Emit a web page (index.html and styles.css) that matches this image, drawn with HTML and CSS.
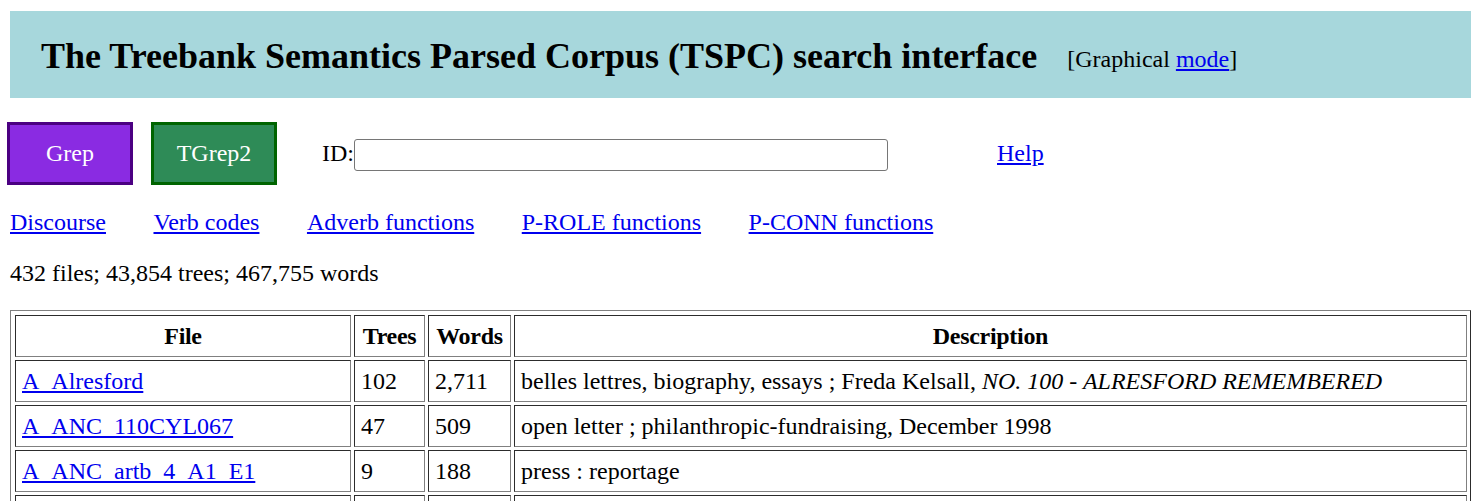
FILE: index.html
```html
<!DOCTYPE html>
<html lang="en">
<head>
<meta charset="utf-8">
<title>TSPC search interface</title>
<link rel="stylesheet" href="styles.css">
</head>
<body>
<header class="banner">
  <h1 class="title">The Treebank Semantics Parsed Corpus (TSPC) search interface</h1>
  <span class="mode">[Graphical <a href="#">mode</a>]</span>
</header>

<form class="controls">
  <button type="button" class="btn btn-grep">Grep</button>
  <button type="button" class="btn btn-tgrep">TGrep2</button>
  <label class="id-label" for="idfield">ID:</label><input id="idfield" class="id-input" type="text">
  <a class="help" href="#">Help</a>
</form>

<nav class="links">
  <a href="#">Discourse</a>
  <a href="#">Verb codes</a>
  <a href="#">Adverb functions</a>
  <a href="#">P-ROLE functions</a>
  <a href="#">P-CONN functions</a>
</nav>

<p class="stats">432 files; 43,854 trees; 467,755 words</p>

<table class="files">
  <thead>
    <tr>
      <th class="c-file">File</th>
      <th class="c-trees">Trees</th>
      <th class="c-words">Words</th>
      <th class="c-desc">Description</th>
    </tr>
  </thead>
  <tbody>
    <tr>
      <td><a href="#">A_Alresford</a></td>
      <td>102</td>
      <td>2,711</td>
      <td>belles lettres, biography, essays ; Freda Kelsall, <i>NO. 100 - ALRESFORD REMEMBERED</i></td>
    </tr>
    <tr>
      <td><a href="#">A_ANC_110CYL067</a></td>
      <td>47</td>
      <td>509</td>
      <td>open letter ; philanthropic-fundraising, December 1998</td>
    </tr>
    <tr>
      <td><a href="#">A_ANC_artb_4_A1_E1</a></td>
      <td>9</td>
      <td>188</td>
      <td>press : reportage</td>
    </tr>
    <tr>
      <td><a href="#">A_ANC_artb_4_A1_E2</a></td>
      <td>11</td>
      <td>205</td>
      <td>press : reportage</td>
    </tr>
  </tbody>
</table>
</body>
</html>
```

FILE: styles.css
```css
html, body {
  margin: 0;
  padding: 0;
  background: #ffffff;
  color: #000000;
  font-family: "Liberation Serif", "Times New Roman", serif;
  font-size: 24px;
}

a {
  color: #0000ee;
  text-decoration: underline;
}

.banner {
  margin: 11px 9px 0 10px;
  height: 87px;
  background: #a7d7dc;
  display: flex;
  align-items: center;
  padding-left: 31px;
  box-sizing: border-box;
}

.title {
  margin: 0;
  font-size: 36px;
  font-weight: bold;
  line-height: 1;
  position: relative;
  top: 1px;
}

.mode {
  margin-left: 30px;
  font-size: 24px;
  position: relative;
  top: 5px;
}

.controls {
  display: flex;
  align-items: center;
  margin: 24px 0 0 0;
  padding-left: 7px;
  height: 63px;
}

.btn {
  box-sizing: border-box;
  width: 126px;
  height: 63px;
  border: 3px solid;
  font-family: "Liberation Serif", "Times New Roman", serif;
  font-size: 24px;
  color: #ffffff;
  padding: 0;
  cursor: pointer;
}

.btn-grep {
  background: #8a2be2;
  border-color: #4b0082;
  margin-right: 18px;
}

.btn-tgrep {
  background: #2e8b57;
  border-color: #006400;
}

.id-label {
  margin-left: 45px;
}

.id-input {
  box-sizing: border-box;
  width: 534px;
  height: 32px;
  margin: 2px 0 0 0;
  border: 1px solid #767676;
  border-radius: 3px;
  font-size: 16px;
  padding: 0 4px;
}

.help {
  margin-left: 109px;
}

.links {
  display: flex;
  gap: 47.5px;
  margin: 24px 0 0 10px;
}

.stats {
  margin: 24px 0 0 10px;
}

.files {
  margin: 23px 0 0 10px;
  width: 1461px;
  table-layout: fixed;
  border: 1px outset #808080;
  border-spacing: 3px;
  padding: 1px 0 0 1px;
}

.files th,
.files td {
  border: 1px inset #808080;
  padding: 6px;
  line-height: 28px;
  text-align: left;
  white-space: nowrap;
  box-sizing: border-box;
}

.files th {
  text-align: center;
  font-weight: bold;
  letter-spacing: -0.3px;
}

.files .c-file {
  width: 336px;
}

.files .c-trees {
  width: 71px;
}

.files .c-words {
  width: 83px;
}
```
